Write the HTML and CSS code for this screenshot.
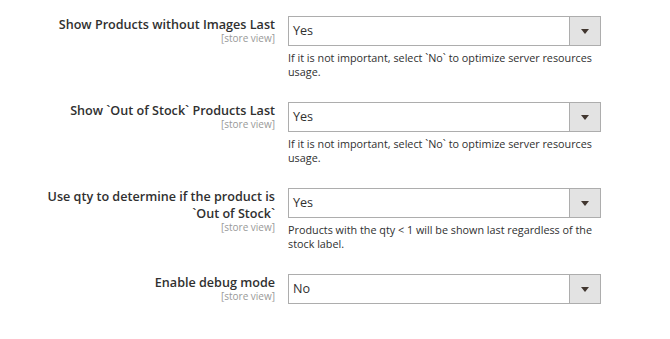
FILE: index.html
```html
<!DOCTYPE html>
<html>
<head>
<meta charset="utf-8">
<link rel="stylesheet" href="styles.css">
</head>
<body>
<div class="form">
  <div class="row">
    <div class="label">
      <span class="title">Show Products without Images Last</span>
      <span class="scope">[store view]</span>
    </div>
    <div class="control">
      <div class="select"><span class="value">Yes</span><span class="arrow"></span></div>
      <p class="note">If it is not important, select `No` to optimize server resources usage.</p>
    </div>
  </div>
  <div class="row">
    <div class="label">
      <span class="title">Show `Out of Stock` Products Last</span>
      <span class="scope">[store view]</span>
    </div>
    <div class="control">
      <div class="select"><span class="value">Yes</span><span class="arrow"></span></div>
      <p class="note">If it is not important, select `No` to optimize server resources usage.</p>
    </div>
  </div>
  <div class="row">
    <div class="label">
      <span class="title">Use qty to determine if the product is `Out of Stock`</span>
      <span class="scope">[store view]</span>
    </div>
    <div class="control">
      <div class="select"><span class="value">Yes</span><span class="arrow"></span></div>
      <p class="note">Products with the qty &lt; 1 will be shown last regardless of the stock label.</p>
    </div>
  </div>
  <div class="row">
    <div class="label">
      <span class="title">Enable debug mode</span>
      <span class="scope">[store view]</span>
    </div>
    <div class="control">
      <div class="select"><span class="value">No</span><span class="arrow"></span></div>
    </div>
  </div>
</div>
</body>
</html>
```
FILE: styles.css
```css
html, body {
  margin: 0;
  padding: 0;
  background: #ffffff;
}
body {
  font-family: "Open Sans", "Liberation Sans", sans-serif;
  color: #303030;
}
.form {
  display: flex;
  flex-direction: column;
  gap: 23px;
  padding-top: 16px;
}
.row {
  display: grid;
  grid-template-columns: 275px 313px;
  column-gap: 13px;
  align-items: start;
  min-height: 63px;
}
.label {
  display: flex;
  flex-direction: column;
  align-items: flex-end;
  text-align: right;
  padding-left: 35px;
}
.title {
  font-size: 12.6px;
  font-weight: 600;
  line-height: 17px;
  color: #303030;
}
.scope {
  font-size: 10px;
  line-height: 11px;
  color: #999999;
}
.control {
  display: flex;
  flex-direction: column;
}
.select {
  height: 30px;
  box-sizing: border-box;
  border: 1px solid #adadad;
  display: flex;
  align-items: stretch;
  background: #ffffff;
}
.value {
  flex: 1;
  font-size: 12.6px;
  line-height: 28px;
  padding-left: 4px;
  color: #303030;
}
.arrow {
  width: 30px;
  background: #e3e3e3;
  border-left: 1px solid #adadad;
  display: flex;
  align-items: center;
  justify-content: center;
}
.arrow::after {
  content: "";
  width: 0;
  height: 0;
  border-left: 4px solid transparent;
  border-right: 4px solid transparent;
  border-top: 5px solid #41362f;
}
.note {
  margin: 5px 0 0 0;
  font-size: 10.8px;
  line-height: 14px;
  color: #303030;
}
```
